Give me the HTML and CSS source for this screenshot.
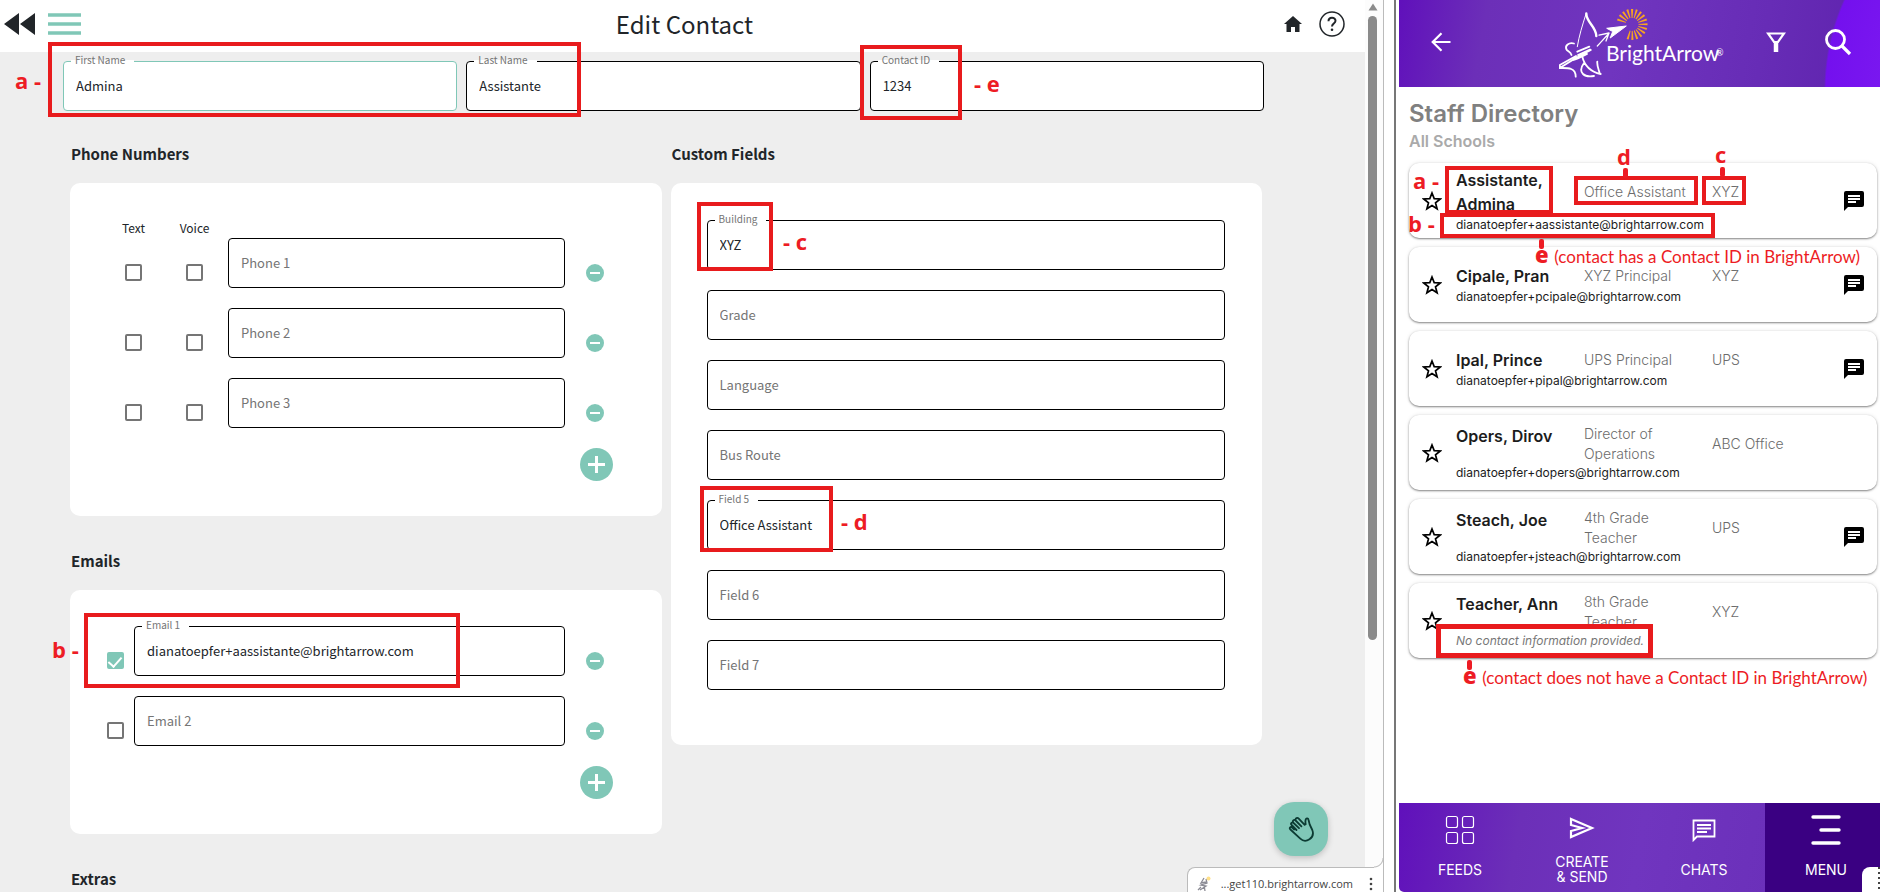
FILE: index.html
```html
<!DOCTYPE html>
<html lang="en">
<head>
    <meta charset="UTF-8">
    <title>Edit Contact</title>
    <link rel="stylesheet" href="styles.css">
</head>
<body>
<main class="admin">
    <div class="page">
        <header class="topbar">
            <button class="icon-btn" aria-label="Back">
                <svg width="32" height="22" viewBox="0 0 32 22"><path d="M15 0v22L0 11zM31 0v22L16 11z" fill="#212529"/></svg>
            </button>
            <button class="icon-btn" aria-label="Menu">
                <svg width="33" height="22" viewBox="0 0 33 22"><path d="M0 2h33M0 11h33M0 20h33" stroke="#80c7b7" stroke-width="3.500"/></svg>
            </button>
            <h1>Edit Contact</h1>
            <a class="home" href="#" aria-label="Home">
                <svg width="18" height="16" viewBox="0 0 18 16"><path d="M9 0l9 8h-2.500v8H11v-5H7v5H2.500V8H0z" fill="#212529"/></svg>
            </a>
            <a href="#" aria-label="Help">
                <svg width="26" height="26" viewBox="0 0 26 26" fill="none" stroke="#212529"><circle cx="13" cy="13" r="12" stroke-width="1.500"/><path d="M9.500 10.300c0-4.800 7-4.600 7-.5 0 2.700-3.500 2.900-3.500 5.700" stroke-width="2"/><circle cx="13" cy="18.700" r="1.300" fill="#212529" stroke="none"/></svg>
            </a>
        </header>

        <form class="form">
            <div class="names">
                <div class="field active"><input id="first" value="Admina"><label for="first">First Name</label></div>
                <div class="field"><input id="last" value="Assistante"><label for="last">Last Name</label></div>
                <div class="field"><input id="cid" value="1234"><label for="cid">Contact ID</label></div>
            </div>

            <div class="columns">
                <div>
                    <h2>Phone Numbers</h2>
                    <section class="card">
                        <div class="phone-row phone-head"><span>Text</span><span>Voice</span></div>
                        <div class="rows">
                            <div class="phone-row">
                                <input type="checkbox" aria-label="Text phone 1">
                                <input type="checkbox" aria-label="Voice phone 1">
                                <div class="field"><input placeholder="Phone 1" aria-label="Phone 1"></div>
                                <button type="button" class="minus" aria-label="Remove phone 1"></button>
                            </div>
                            <div class="phone-row">
                                <input type="checkbox" aria-label="Text phone 2">
                                <input type="checkbox" aria-label="Voice phone 2">
                                <div class="field"><input placeholder="Phone 2" aria-label="Phone 2"></div>
                                <button type="button" class="minus" aria-label="Remove phone 2"></button>
                            </div>
                            <div class="phone-row">
                                <input type="checkbox" aria-label="Text phone 3">
                                <input type="checkbox" aria-label="Voice phone 3">
                                <div class="field"><input placeholder="Phone 3" aria-label="Phone 3"></div>
                                <button type="button" class="minus" aria-label="Remove phone 3"></button>
                            </div>
                            <button type="button" class="plus" aria-label="Add phone"></button>
                        </div>
                    </section>

                    <h2>Emails</h2>
                    <section class="card">
                        <div class="rows">
                            <div class="email-row">
                                <input type="checkbox" checked aria-label="Use email 1">
                                <div class="field"><input id="email1" value="dianatoepfer+aassistante@brightarrow.com"><label for="email1">Email 1</label></div>
                                <button type="button" class="minus" aria-label="Remove email 1"></button>
                            </div>
                            <div class="email-row">
                                <input type="checkbox" aria-label="Use email 2">
                                <div class="field"><input placeholder="Email 2" aria-label="Email 2"></div>
                                <button type="button" class="minus" aria-label="Remove email 2"></button>
                            </div>
                            <button type="button" class="plus" aria-label="Add email"></button>
                        </div>
                    </section>

                    <h2>Extras</h2>
                </div>

                <div>
                    <h2>Custom Fields</h2>
                    <section class="card custom">
                        <div class="field"><input id="building" value="XYZ"><label for="building">Building</label></div>
                        <div class="field"><input placeholder="Grade" aria-label="Grade"></div>
                        <div class="field"><input placeholder="Language" aria-label="Language"></div>
                        <div class="field"><input placeholder="Bus Route" aria-label="Bus Route"></div>
                        <div class="field"><input id="field5" value="Office Assistant"><label for="field5">Field 5</label></div>
                        <div class="field"><input placeholder="Field 6" aria-label="Field 6"></div>
                        <div class="field"><input placeholder="Field 7" aria-label="Field 7"></div>
                    </section>
                </div>
            </div>
        </form>
    </div>

    <div class="scrollbar">
        <svg width="10" height="8" viewBox="0 0 10 8"><path d="M5 0.500l4.500 7h-9z" fill="#8a8a8a"/></svg>
        <div class="thumb"></div>
    </div>

    <button class="fab" aria-label="Accessibility">
        <svg width="26" height="26" viewBox="0 0 26 26" fill="none" stroke="#0c3b33" stroke-width="1.800" stroke-linecap="round" stroke-linejoin="round"><path d="M8.500 14L3.600 9c-1.500-1.600.5-3.400 2-2l5.400 5.200M5.600 7C3.800 4.800 6 3 7.600 4.500l5.800 5.800M7.600 4.500C7 2.200 9.400 1.200 10.700 2.600l6 6.200M16.700 8.800l1-.5c-.4-2-.4-3.400 0-4.800.5-1.600 2.500-1.200 2.800.2l1.200 4.800 2.600 5.500c1.500 4-.2 7.500-2.800 9.300-3 2-6.700 1.700-9.200-.6l-9.900-9.200c-1.500-1.700.2-3.300 1.800-1.900l2 1.900"/></svg>
    </button>

    <div class="status">
        <svg width="14" height="16" viewBox="0 0 14 16" fill="none" stroke="#8b8b94" stroke-width="1.300"><path d="M7 2l-3 5 5-1M9 3l1 4-6 2 5 1-6 4M7 9l1 6M4 11l-3 3"/><circle cx="11.500" cy="2.500" r="2" fill="#ffe08a" stroke="none"/></svg>
        <span>...get110.brightarrow.com</span>
        <svg class="dots" width="4" height="14" viewBox="0 0 4 14" fill="#444"><circle cx="2" cy="2" r="1.300"/><circle cx="2" cy="7" r="1.300"/><circle cx="2" cy="12" r="1.300"/></svg>
    </div>

    <div class="note note-name"></div>
    <div class="note note-id"></div>
    <div class="note note-building"></div>
    <div class="note note-field5"></div>
    <div class="note note-email"></div>
    <b class="tag tag-name">a -</b>
    <b class="tag tag-id">- e</b>
    <b class="tag tag-building">- c</b>
    <b class="tag tag-field5">- d</b>
    <b class="tag tag-email">b -</b>
</main>

<aside class="app">
    <header class="app-bar">
        <button class="icon-btn back" aria-label="Back">
            <svg width="20" height="20" viewBox="0 0 20 20" fill="none" stroke="#fff" stroke-width="2.200"><path d="M19.500 10H2M10.500 1.200L1.700 10l8.800 8.800"/></svg>
        </button>
        <div class="logo">
            <svg viewBox="0 0 166 72" width="166" height="72">
                <g fill="none" stroke="#fff" stroke-linecap="round" stroke-linejoin="round">
                    <path d="M18.300 38.700C20 28 23.500 17 27 6" stroke-width="1"/>
                    <path d="M27.300 5.500c0 9 10 13 10 22.500" stroke-width="2.400"/>
                    <path d="M38.300 38c4-4 7-8 11.700-12.500M40 27.200l10-2.200-3 8" stroke-width="1.300"/>
                    <path d="M15 35.500c-5-1.500-9.500 2-7.500 6 1 2 4 2 5 5.500" stroke-width="1.800"/>
                    <path d="M.8 60l16-10 15-8M.8 60v-3L17 48M18.300 43.700l12-5M19 47l12-5.500M14 52c5-1 10-4 14-6" stroke-width="1.800"/>
                    <path d="M.8 60c7 0 16-1 15.900 8.700M23.300 48.700c2 8 8 15 18.400 17.300M38.300 53.700c-.5 4 1.500 8 2.400 11.600M25 55c-3 4-4 8-1 11 3 3 8 2.500 11 2" stroke-width="1.800"/>
                </g>
                <path d="M67.300 18l-19.600 2.300 6 3.200-2.500 6.500z" fill="#fff" stroke="#fff"/>
                <path d="M62.400 13.600A11 11 0 1 1 67.500 25.900" fill="none" stroke="#f9a51e" stroke-width="9" stroke-dasharray="1.500 1.900"/>
                <text x="47" y="53" class="wordmark">BrightArrow</text>
                <text x="157" y="48" class="reg">®</text>
            </svg>
        </div>
        <button class="icon-btn" aria-label="Filter">
            <svg width="20" height="20" viewBox="0 0 20 20" fill="none" stroke="#fff" stroke-width="2.200"><path d="M2 1.500h16l-6 8.500h-4z"/><path d="M10 9v11" stroke-width="4.500"/></svg>
        </button>
        <button class="icon-btn search" aria-label="Search">
            <svg width="28" height="28" viewBox="0 0 28 28" fill="none" stroke="#fff" stroke-width="2.800"><circle cx="11.500" cy="11.500" r="9"/><path d="M17.500 17.500l8.500 8.500" stroke-width="3.200"/></svg>
        </button>
    </header>

    <section class="directory">
        <h2>Staff Directory</h2>
        <h3>All Schools</h3>
        <ul class="staff"></ul>
    </section>

    <nav class="tabs">
        <a href="#">
            <svg width="30" height="30" viewBox="0 0 30 30" fill="none" stroke="#fff" stroke-width="1.200"><rect x="1.500" y="1.500" width="11" height="11" rx="2"/><rect x="17.500" y="1.500" width="11" height="11" rx="2"/><rect x="1.500" y="17.500" width="11" height="11" rx="2"/><rect x="17.500" y="17.500" width="11" height="11" rx="2"/></svg>
            <span>FEEDS</span>
        </a>
        <a href="#">
            <svg width="26" height="26" viewBox="0 0 26 26" fill="none" stroke="#fff" stroke-width="2.200"><path d="M2 2l21 9-21 9v-6l11-3-11-3z"/></svg>
            <span>CREATE<br>&amp; SEND</span>
        </a>
        <a href="#">
            <svg width="24" height="24" viewBox="0 0 24 24" fill="none" stroke="#fff" stroke-width="1.800"><path d="M1.500 22V2.500h21v16H5z"/><path d="M5 7h14M5 10.500h14M5 14h10"/></svg>
            <span>CHATS</span>
        </a>
        <a href="#" class="current">
            <svg width="30" height="30" viewBox="0 0 30 30" stroke="#fff" stroke-width="3.400" stroke-linecap="round"><path d="M2 2h26M10 15h18M2 28h26"/></svg>
            <span>MENU</span>
        </a>
    </nav>
    <div class="corner"></div>

    <div class="note app-name"></div>
    <div class="note app-role"></div>
    <div class="note app-school"></div>
    <div class="note app-email"></div>
    <div class="note app-none"></div>
    <i class="stem stem-role"></i>
    <i class="stem stem-school"></i>
    <i class="stem stem-has"></i>
    <i class="stem stem-none"></i>
    <b class="tag app-tag-a">a -</b>
    <b class="tag app-tag-b">b -</b>
    <b class="tag app-tag-d">d</b>
    <b class="tag app-tag-c">c</b>
    <p class="tag has-id"><b>e</b> <span>(contact has a Contact ID in BrightArrow)</span></p>
    <p class="tag no-id"><b>e</b> <span>(contact does not have a Contact ID in BrightArrow)</span></p>
</aside>
<script src="staff.js"></script>
</body>
</html>
```

FILE: styles.css
```css
* {
    box-sizing: border-box;
    margin: 0;
    padding: 0;
}

body {
    display: flex;
    height: 100vh;
    overflow: hidden;
    background: #fff;
    color: #212529;
    font-family: "Noto Sans CJK SC", "Noto Sans CJK JP", sans-serif;
}

button {
    border: 0;
    background: none;
    cursor: pointer;
}

svg {
    display: block;
    flex: none;
}

/* edit contact */
.admin {
    position: relative;
    flex: 1;
    display: flex;
    margin-right: 10px;
    border-right: 1px solid #bbb;
    overflow: hidden;
}

.page {
    flex: 1;
    background: #eee;
}

.topbar {
    display: flex;
    align-items: center;
    gap: 12px;
    height: 52px;
    padding: 0 20px 4px 4px;
    background: #fff;
}

.topbar h1 {
    flex: 1;
    padding-left: 4px;
    text-align: center;
    font-size: 24px;
    line-height: 36px;
    font-weight: 400;
}

.home {
    margin-right: 5px;
}

.form {
    padding: 9px 101px 0 63px;
}

.names {
    display: grid;
    grid-template-columns: repeat(3, 1fr);
    gap: 9px;
}

.field {
    position: relative;
}

.field input {
    display: block;
    width: 100%;
    height: 50px;
    padding: 0 12px 1px;
    border: 1px solid #000;
    border-radius: 4px;
    background: #fff;
    color: #212529;
    font: 13px "Noto Sans CJK SC", sans-serif;
    outline: none;
}

.field input::placeholder {
    color: #757575;
}

.active input {
    border-color: #80c7b7;
}

.field label {
    position: absolute;
    top: -9px;
    left: 8px;
    padding: 0 9px 0 4px;
    background: linear-gradient(#fff, #fff) 0 8px / 100% 3px no-repeat;
    color: #757575;
    font-size: 10px;
    line-height: 16px;
}

.columns {
    display: grid;
    grid-template-columns: 1fr 1fr;
    gap: 9px;
    padding: 0 2px 0 7px;
}

.columns h2 {
    margin: 33px 0 17px 1px;
    font-size: 15px;
    line-height: 24px;
    font-weight: 700;
}

.columns > div > h2:first-child {
    margin-top: 31px;
}

.card {
    padding: 36px 36px 35px 33px;
    border-radius: 10px;
    background: #fff;
}

.rows,
.custom {
    display: grid;
    gap: 20px;
}

.custom {
    padding: 37px 37px 55px 36px;
}

.phone-row,
.email-row {
    display: grid;
    grid-template-columns: 61px 61px 1fr 61px;
    align-items: center;
    justify-items: center;
}

.email-row {
    grid-template-columns: 24px 1fr 61px;
}

.phone-row .field {
    justify-self: stretch;
    margin-left: 3px;
}

.email-row .field {
    justify-self: stretch;
    margin-left: 7px;
}

.phone-head {
    padding-bottom: 1px;
    font-size: 12px;
    line-height: 18px;
}

input[type="checkbox"] {
    appearance: none;
    width: 17px;
    height: 17px;
    margin-top: 19px;
    border: 2px solid #757575;
    border-radius: 2px;
    background: #fff;
}

input[type="checkbox"]:checked {
    border-color: #80c7b7;
    background: #80c7b7;
}

input[type="checkbox"]:checked::after {
    content: "";
    display: block;
    width: 6px;
    height: 11px;
    margin: 0 auto;
    border: solid #fff;
    border-width: 0 2px 2px 0;
    transform: rotate(42deg);
}

.minus,
.plus {
    display: block;
    width: 18px;
    height: 18px;
    margin-top: 19px;
    border-radius: 50%;
    background: linear-gradient(#fff, #fff) center / 10px 2px no-repeat #80c7b7;
}

.plus {
    justify-self: end;
    width: 33px;
    height: 33px;
    margin: 0 13px 0 0;
    background:
        linear-gradient(#fff, #fff) center / 17px 3px no-repeat,
        linear-gradient(#fff, #fff) center / 3px 17px no-repeat,
        #80c7b7;
}

.scrollbar {
    width: 18px;
    padding: 3px 0 0 3px;
    background: #fcfcfc;
}

.thumb {
    width: 9px;
    height: 70vh;
    margin-top: 5px;
    border-radius: 5px;
    background: #8a8a8a;
}

.fab {
    position: absolute;
    right: 55px;
    bottom: 36px;
    display: flex;
    align-items: center;
    justify-content: center;
    width: 54px;
    height: 54px;
    border-radius: 20px;
    background: #80c7b7;
    box-shadow: 0 2px 6px rgba(0, 0, 0, 0.2);
}

.status {
    position: absolute;
    right: -1px;
    bottom: 0;
    display: flex;
    align-items: center;
    gap: 16px;
    width: 197px;
    height: 25px;
    padding: 8px 11px 0 9px;
    border: solid #bbb;
    border-width: 1px 0 0 1px;
    border-radius: 8px 0 0 0;
    background: #fff;
    color: #444;
    font: 11px/16px "Open Sans", sans-serif;
    white-space: nowrap;
}

.status span {
    flex: 1;
    margin-left: -9px;
    text-align: right;
}

/* rounded corner where the page edge meets the status tab */
.status::before {
    content: "";
    position: absolute;
    right: 0;
    top: -10px;
    width: 10px;
    height: 10px;
    background: radial-gradient(circle at 0 0, transparent 8px, #bbb 9px, #fff 10px);
}

/* staff directory */
.app {
    position: relative;
    display: flex;
    flex-direction: column;
    width: 486px;
    padding-left: 3px;
    border-left: 2px solid #777;
    overflow: hidden;
    font-family: Inter, sans-serif;
}

.app-bar {
    display: flex;
    align-items: center;
    height: 87px;
    padding: 0 28px 3px 32px;
    background:
        radial-gradient(circle 220px at 645px 90px, #8a2cf5, #7410ee 218px, transparent 220px),
        linear-gradient(100deg, #6010bb 0%, #6c2fb8 18%, #7035bf 45%, #672cb6 75%, #5e22ad 100%);
}

.logo {
    flex: 1;
    padding: 4px 0 0 108px;
}

.wordmark {
    fill: #fff;
    font: 21px Lato, sans-serif;
}

.reg {
    fill: #fff;
    font: 9px Lato, sans-serif;
}

.search {
    margin-left: 38px;
}

.directory {
    flex: 1;
    padding: 10px 3px 0 10px;
}

.directory h2 {
    color: #808080;
    font-size: 24px;
    line-height: 34px;
    font-weight: 600;
}

.directory h3 {
    color: #aaa;
    font-size: 16px;
    line-height: 20px;
    font-weight: 600;
}

.staff {
    display: grid;
    gap: 9px;
    margin-top: 12px;
    list-style: none;
}

.person {
    display: grid;
    grid-template-columns: 47px 1fr 33px;
    align-items: center;
    min-height: 75px;
    border-radius: 10px;
    background: #fff;
    box-shadow: 0 1px 2px rgba(0, 0, 0, 0.45), 0 0 4px rgba(0, 0, 0, 0.1);
}

.person .star {
    margin-left: 13px;
}

.info {
    display: grid;
    grid-template-columns: 128px 128px 1fr;
    align-items: center;
}

.name {
    align-self: start;
    padding-right: 20px;
    color: #1c1c1c;
    font-size: 16px;
    line-height: 24px;
    font-weight: 600;
}

.role,
.school {
    padding-right: 16px;
    color: #6c6c6c;
    font-size: 14px;
    line-height: 20px;
    font-weight: 300;
}

.mail {
    grid-column: 1 / -1;
    color: #1c1c1c;
    font-size: 12px;
    line-height: 18px;
}

.none {
    color: #777;
    font-style: italic;
}

.tabs {
    display: flex;
    height: 89px;
    overflow: hidden;
    border-radius: 0 0 0 5px;
    background: linear-gradient(100deg, #6010bb 0%, #6c2fb8 25%, #7035bf 50%, #672cb6 100%);
}

.tabs a {
    flex: 0 0 122px;
    display: flex;
    flex-direction: column;
    align-items: center;
    padding-top: 12px;
    color: #fff;
    font-size: 14px;
    line-height: 15px;
    text-align: center;
    text-decoration: none;
}

.tabs svg {
    height: 30px;
}

.tabs span {
    display: flex;
    align-items: center;
    height: 32px;
    margin-top: 8px;
}

.tabs .current {
    background: #3a0082;
}

.corner {
    position: absolute;
    right: 0;
    bottom: 0;
    width: 18px;
    height: 25px;
    border-radius: 8px 0 0 0;
    background: linear-gradient(#444 2px, transparent 2px) 16px 10px / 2px 5px repeat-y #fff;
}

/* red notes drawn over both screens */
.note {
    position: absolute;
    border: 4px solid #e81b1d;
    pointer-events: none;
}

.tag {
    position: absolute;
    color: #ed1c24;
    font: 700 22px/30px "Open Sans", sans-serif;
    white-space: nowrap;
}

.note-name { left: 48px; top: 42px; width: 533px; height: 75px; }
.note-id { left: 860px; top: 45px; width: 102px; height: 75px; }
.note-building { left: 697px; top: 202px; width: 76px; height: 69px; }
.note-field5 { left: 700px; top: 486px; width: 133px; height: 66px; }
.note-email { left: 84px; top: 613px; width: 376px; height: 75px; }

.tag-name { left: 15px; top: 65px; }
.tag-id { left: 974px; top: 68px; }
.tag-building { left: 783px; top: 226px; }
.tag-field5 { left: 841px; top: 506px; }
.tag-email { left: 52px; top: 634px; }

.app-name { left: 49px; top: 166px; width: 108px; height: 48px; }
.app-role { left: 178px; top: 176px; width: 124px; height: 29px; }
.app-school { left: 306px; top: 176px; width: 44px; height: 29px; }
.app-email { left: 44px; top: 213px; width: 275px; height: 25px; }
.app-none { left: 40px; top: 624px; width: 217px; height: 34px; border-width: 5px; }

.stem {
    position: absolute;
    width: 5px;
    height: 10px;
    border-radius: 2px;
    background: #ed1c24;
}

.stem-role { left: 227px; top: 168px; }
.stem-school { left: 324px; top: 167px; }
.stem-has { left: 143px; top: 239px; }
.stem-none { left: 71px; top: 660px; }

.app-tag-a { left: 17px; top: 165px; }
.app-tag-b { left: 12px; top: 208px; }
.app-tag-d { left: 221px; top: 141px; }
.app-tag-c { left: 319px; top: 139px; }
.has-id { left: 139px; top: 239px; }
.no-id { left: 67px; top: 660px; }

.has-id span,
.no-id span {
    font: 17px Lato, sans-serif;
}
```

FILE: staff.js
```js
var people = [
    {name: "Assistante, Admina", role: "Office Assistant", school: "XYZ", mail: "dianatoepfer+aassistante@brightarrow.com", chat: true},
    {name: "Cipale, Pran", role: "XYZ Principal", school: "XYZ", mail: "dianatoepfer+pcipale@brightarrow.com", chat: true},
    {name: "Ipal, Prince", role: "UPS Principal", school: "UPS", mail: "dianatoepfer+pipal@brightarrow.com", chat: true},
    {name: "Opers, Dirov", role: "Director of Operations", school: "ABC Office", mail: "dianatoepfer+dopers@brightarrow.com"},
    {name: "Steach, Joe", role: "4th Grade Teacher", school: "UPS", mail: "dianatoepfer+jsteach@brightarrow.com", chat: true},
    {name: "Teacher, Ann", role: "8th Grade Teacher", school: "XYZ", mail: ""}
];

var star = '<svg width="20" height="20" viewBox="0 0 20 20" fill="none" stroke="#000" stroke-width="1.7"><path d="M10 2l2.200 5.600 6 .4-4.700 3.800 1.600 6-5.100-3.300-5.100 3.300 1.600-6L1.800 8l6-.4z"/></svg>';
var chat = '<svg width="20" height="20" viewBox="0 0 20 20"><path d="M2 0h16a2 2 0 0 1 2 2v12a2 2 0 0 1-2 2H4l-4 4V2a2 2 0 0 1 2-2z"/><path d="M4 5h12M4 8h12M4 11h8" stroke="#fff" stroke-width="1.800"/></svg>';

var list = document.querySelector(".staff");
var str = "";
for (var i = 0; i < people.length; i++) {
    var p = people[i];
    str += '<li class="person"><button class="star" aria-label="Favorite">' + star + '</button>' +
        '<div class="info"><span class="name">' + p.name + '</span>' +
        '<span class="role">' + p.role + '</span><span class="school">' + p.school + '</span>' +
        (p.mail ? '<span class="mail">' + p.mail + '</span>' : '<span class="mail none">No contact information provided.</span>') +
        '</div>' + (p.chat ? '<button aria-label="Chat">' + chat + '</button>' : '') + '</li>';
}
list.innerHTML = str;
```
